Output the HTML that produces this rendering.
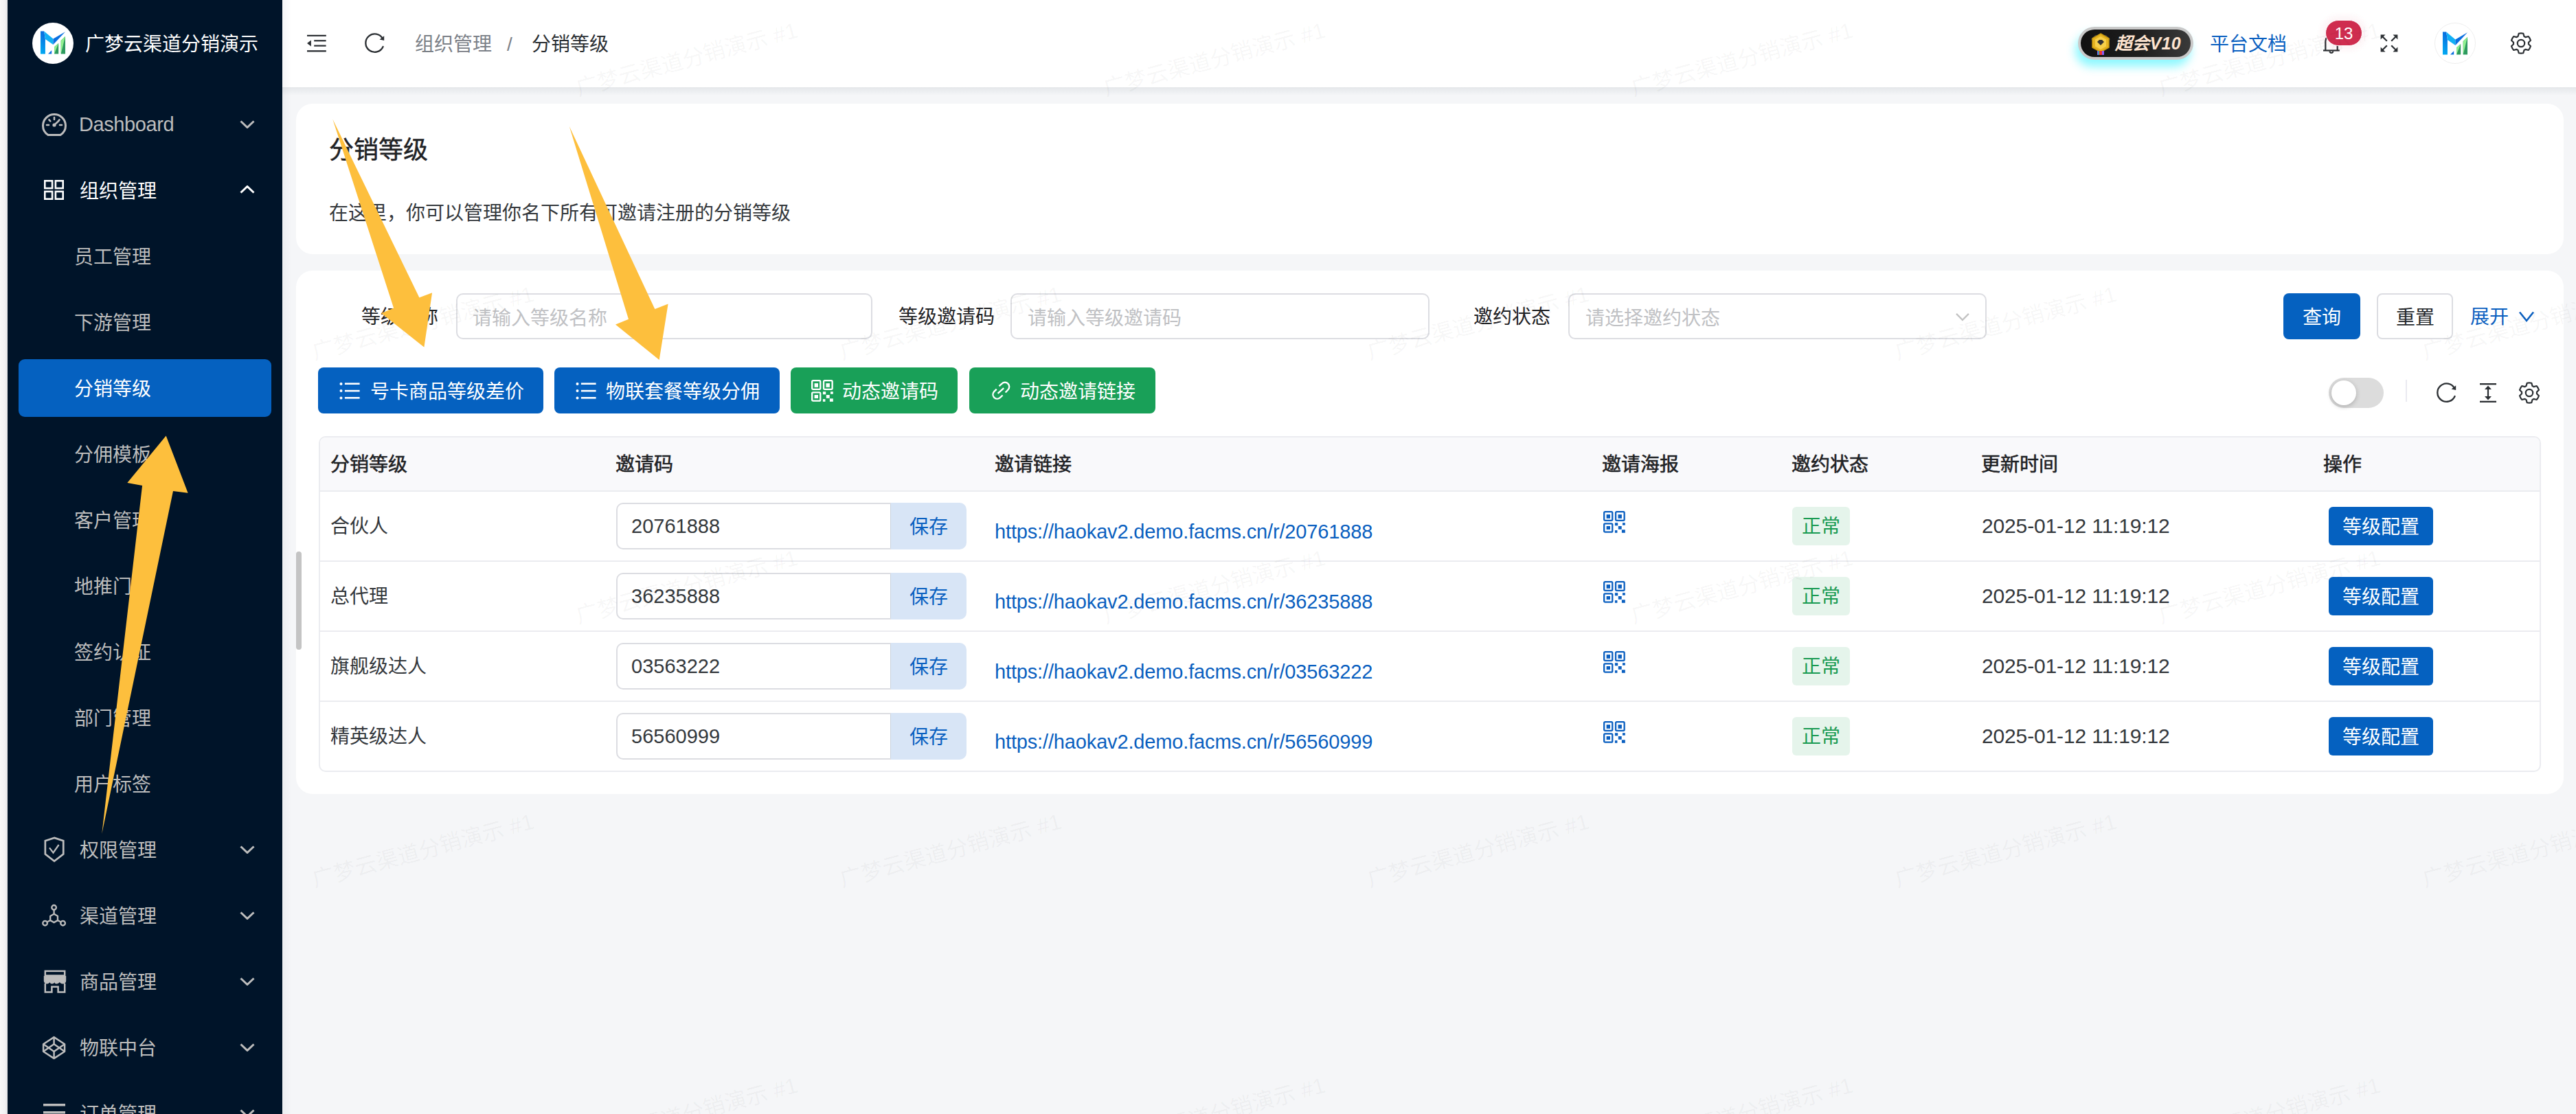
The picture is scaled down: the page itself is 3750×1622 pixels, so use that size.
<!DOCTYPE html>
<html lang="zh-CN">
<head>
<meta charset="utf-8">
<style>
*{box-sizing:border-box;margin:0;padding:0}
html,body{width:3750px;height:1622px;overflow:hidden}
body{position:relative;background:#f5f6f8;font-family:"Liberation Sans",sans-serif;font-size:28px;color:#23272b}
.a{position:absolute;white-space:nowrap}
#strip{left:0;top:0;width:11px;height:1622px;background:linear-gradient(90deg,#f8f8f9,#f2f2f4 65%,#e4e4e7)}
#side{left:11px;top:0;width:400px;height:1622px;background:#001429;overflow:hidden}
#hdr{left:411px;top:0;width:3339px;height:127px;background:#fff}
#hshadow{left:411px;top:127px;width:3339px;height:12px;background:linear-gradient(#e4e7ea,#f5f6f8)}
.card{background:#fff;border-radius:24px}
.mi{color:#bdbdbd;line-height:40px;font-size:28px}
.mi.w{color:#fff}
.ico{position:absolute}
.btn{position:absolute;border-radius:8px;color:#fff;font-size:28px;line-height:67px;height:67px}
.inp{position:absolute;border:2px solid #dcdde2;border-radius:10px;background:#fff;height:67px}
.ph{color:#c0c1c4}
.th{font-weight:normal;color:#1f2225;-webkit-text-stroke:0.6px #1f2225}
.hline{position:absolute;left:464px;width:3234px;height:2px;background:#ebecf0}
</style>
</head>
<body>
<div id="strip" class="a"></div>
<svg width="0" height="0" style="position:absolute"><defs>
<linearGradient id="gL" x1="0" y1="1" x2="0.3" y2="0"><stop offset="0" stop-color="#00d4ff"/><stop offset="1" stop-color="#0a6ee0"/></linearGradient>
<symbol id="mlogo" viewBox="140 150 900 830">
<path d="M150 160H275L320 440V970H150Z" fill="url(#gL)"/>
<path d="M150 160H275L310 970H150Z" fill="#0a6fe0" opacity=".35"/>
<path d="M275 160L600 430L600 640L320 440Z" fill="#12b0f5"/>
<path d="M600 430L1030 180L600 640Z" fill="#0a6fe0"/>
<path d="M420 965L545 840V965Z" fill="#0a6fe0"/>
<path d="M640 720L790 590V965H640Z" fill="#2e9a5f"/>
<path d="M640 720L790 590L640 965Z" fill="#90f090"/>
<path d="M875 490L1030 345V965H875Z" fill="#2e9a5f"/>
<path d="M875 490L1030 345L875 965Z" fill="#90f090"/>
</symbol>
</defs></svg>

<div id="side" class="a">
 <div class="a" style="left:36px;top:33px;width:60px;height:60px;border-radius:50%;background:#fff"></div>
 <svg class="ico" style="left:47px;top:45px" width="38" height="34"><use href="#mlogo" width="100%" height="100%"/></svg>
 <div class="a" style="left:113px;top:45px;line-height:40px;color:#fff;font-size:28px">广梦云渠道分销演示</div>
 <!-- Dashboard -->
 <svg class="ico" style="left:50px;top:165px" width="36" height="34" viewBox="0 0 36 34"><g fill="none" stroke="#bdbdbd" stroke-width="3"><path d="M9 31.5 C3.5 28 1.5 22.5 1.5 18 A16.5 16.5 0 0 1 34.5 18 C34.5 22.5 32.5 28 27 31.5 Z"/></g><g stroke="#bdbdbd" stroke-width="2.6" stroke-linecap="round"><path d="M18 6v3M7 17h3M26 17h3M10.5 9.5l1.8 1.8M25.5 9.5l-1.8 1.8M18 17l6.5-6"/></g><circle cx="18" cy="17" r="2.6" fill="#bdbdbd"/></svg>
 <div class="a mi" style="left:104px;top:161px;font-size:29px;letter-spacing:-0.4px">Dashboard</div>
 <svg class="ico" style="left:338px;top:175px" width="22" height="12" viewBox="0 0 22 12"><path d="M1.5 1.5l9.5 9 9.5-9" fill="none" stroke="#bdbdbd" stroke-width="3"/></svg>
 <!-- 组织管理 -->
 <svg class="ico" style="left:53px;top:262px" width="30" height="30" viewBox="0 0 30 30"><g fill="none" stroke="#fff" stroke-width="2.6"><rect x="1.3" y="1.3" width="10.8" height="10.8"/><rect x="16.9" y="1.3" width="10.8" height="10.8"/><rect x="1.3" y="16.9" width="10.8" height="10.8"/><rect x="16.9" y="16.9" width="10.8" height="10.8"/></g></svg>
 <div class="a mi w" style="left:105px;top:259px">组织管理</div>
 <svg class="ico" style="left:338px;top:270px" width="22" height="12" viewBox="0 0 22 12"><path d="M1.5 10.5l9.5-9 9.5 9" fill="none" stroke="#fff" stroke-width="3"/></svg>
 <!-- submenu -->
 <div class="a mi" style="left:97px;top:355px">员工管理</div>
 <div class="a mi" style="left:97px;top:451px">下游管理</div>
 <div class="a" style="left:16px;top:523px;width:368px;height:84px;border-radius:9px;background:#0561c0"></div>
 <div class="a mi w" style="left:97px;top:547px">分销等级</div>
 <div class="a mi" style="left:97px;top:643px">分佣模板</div>
 <div class="a mi" style="left:97px;top:739px">客户管理</div>
 <div class="a mi" style="left:97px;top:835px">地推门店</div>
 <div class="a mi" style="left:97px;top:931px">签约认证</div>
 <div class="a mi" style="left:97px;top:1027px">部门管理</div>
 <div class="a mi" style="left:97px;top:1123px">用户标签</div>
 <!-- 权限管理 -->
 <svg class="ico" style="left:49px;top:1214px" width="40" height="46" viewBox="60 1214 40 46"><path d="M79.04 1219.9 L92.26 1224.3 V1243.6 L79.04 1253.7 L65.86 1243.6 V1224.3 Z" fill="none" stroke="#bdbdbd" stroke-width="2.7" stroke-linejoin="miter"/><path d="M72 1234.4 L77.5 1241.6 L85.6 1230" fill="none" stroke="#bdbdbd" stroke-width="2.3"/></svg>
 <div class="a mi" style="left:105px;top:1219px">权限管理</div>
 <svg class="ico" style="left:338px;top:1231px" width="22" height="12" viewBox="0 0 22 12"><path d="M1.5 1.5l9.5 9 9.5-9" fill="none" stroke="#bdbdbd" stroke-width="3"/></svg>
 <!-- 渠道管理 -->
 <svg class="ico" style="left:45px;top:1314px" width="44" height="36" viewBox="56 1314 44 36"><g fill="none" stroke="#bdbdbd" stroke-width="2.3"><circle cx="78.6" cy="1321.3" r="3.3"/><circle cx="65.6" cy="1344.2" r="3.3"/><circle cx="91.6" cy="1344.2" r="3.3"/><polygon points="78.60,1330.70 73.23,1333.80 73.23,1340.00 78.60,1343.10 83.97,1340.00 83.97,1333.80"/><path d="M78.6 1324.6 V1330.7 M68.5 1342.5 L73.2 1340 M88.7 1342.5 L84 1340"/></g></svg>
 <div class="a mi" style="left:105px;top:1315px">渠道管理</div>
 <svg class="ico" style="left:338px;top:1327px" width="22" height="12" viewBox="0 0 22 12"><path d="M1.5 1.5l9.5 9 9.5-9" fill="none" stroke="#bdbdbd" stroke-width="3"/></svg>
 <!-- 商品管理 -->
 <svg class="ico" style="left:52px;top:1411px" width="34" height="36" viewBox="0 0 34 36"><g fill="none" stroke="#bdbdbd" stroke-width="2.5"><rect x="2.8" y="2.9" width="28.4" height="6.6"/><path d="M2.8 21 V33.4 H12.4 V25.8 H21.6 V33.4 H31.2 V21"/></g><path fill="#bdbdbd" d="M0.8 10 H33.2 V17 C33.2 19.5 31.5 21.5 28.5 21.5 C26 21.5 24.5 20 23.8 19 C23 20.5 21 21.5 19.2 21.5 C17.2 21.5 16 20.5 17 19 C16 20.5 14.2 21.5 12.8 21.5 C11 21.5 9.5 20.5 9.5 19 C8.8 20.5 7.2 21.5 5.5 21.5 C2.5 21.5 0.8 19.5 0.8 17Z"/></svg>
 <div class="a mi" style="left:105px;top:1411px">商品管理</div>
 <svg class="ico" style="left:338px;top:1423px" width="22" height="12" viewBox="0 0 22 12"><path d="M1.5 1.5l9.5 9 9.5-9" fill="none" stroke="#bdbdbd" stroke-width="3"/></svg>
 <!-- 物联中台 -->
 <svg class="ico" style="left:49.4px;top:1506.5px" width="37.2" height="37.2" viewBox="0 0 24 24"><g fill="none" stroke="#bdbdbd" stroke-width="1.6" stroke-linejoin="round"><polygon points="12 2 22 8.5 22 15.5 12 22 2 15.5 2 8.5 12 2"/><line x1="12" y1="22" x2="12" y2="15.5"/><polyline points="22 8.5 12 15.5 2 8.5"/><polyline points="2 15.5 12 8.5 22 15.5"/><line x1="12" y1="2" x2="12" y2="8.5"/></g></svg>
 <div class="a mi" style="left:105px;top:1507px">物联中台</div>
 <svg class="ico" style="left:338px;top:1519px" width="22" height="12" viewBox="0 0 22 12"><path d="M1.5 1.5l9.5 9 9.5-9" fill="none" stroke="#bdbdbd" stroke-width="3"/></svg>
 <!-- 订单管理 -->
 <svg class="ico" style="left:52px;top:1606px" width="32" height="30" viewBox="0 0 32 30"><g fill="#bdbdbd"><rect x="0" y="1" width="32" height="3.5"/><rect x="0" y="12" width="32" height="3.5"/><rect x="0" y="23" width="32" height="3.5"/></g></svg>
 <div class="a mi" style="left:105px;top:1603px">订单管理</div>
 <svg class="ico" style="left:338px;top:1615px" width="22" height="12" viewBox="0 0 22 12"><path d="M1.5 1.5l9.5 9 9.5-9" fill="none" stroke="#bdbdbd" stroke-width="3"/></svg>
</div>


<div id="hdr" class="a">
</div>
<!-- header content (absolute, page coords) -->
<svg class="ico" style="left:446px;top:50px" width="30" height="27" viewBox="446 50 30 27"><g fill="#2b2f33"><rect x="447" y="50.8" width="27.8" height="2.2"/><rect x="457.2" y="58.2" width="17.4" height="2.2"/><rect x="457.2" y="65.5" width="17.4" height="2.2"/><rect x="447" y="73.2" width="27.8" height="2.3"/><path d="M447 63 L452.9 58.4 V67.5Z"/></g></svg>
<svg class="ico" style="left:528px;top:46px" width="34" height="34" viewBox="528 46 34 34"><path d="M557.2 56.5 A13.2 13.2 0 1 0 557.6 68" fill="none" stroke="#2b2f33" stroke-width="2.3" stroke-linecap="round"/><path d="M559.2 52.3 V59 L552.6 57.4Z" fill="#2b2f33"/></svg>
<div class="a" style="left:604px;top:45px;line-height:40px;color:#7b8087">组织管理</div>
<div class="a" style="left:738px;top:45px;line-height:40px;color:#7b8087">/</div>
<div class="a" style="left:774px;top:45px;line-height:40px;color:#2b2f33">分销等级</div>
<!-- VIP badge -->
<div class="a" style="left:3025px;top:39px;width:168px;height:48px;border-radius:24px;background:#c9c9c9;box-shadow:-4px 10px 14px rgba(0,240,255,.45)"></div>
<div class="a" style="left:3029px;top:43px;width:160px;height:40px;border-radius:20px;background:linear-gradient(90deg,#111 0%,#1f1f1f 55%,#3a3a3a 100%)"></div>
<svg class="ico" style="left:3040px;top:47px" width="36" height="34" viewBox="0 0 36 34"><path d="M4 10 L10 4 L26 4 L32 10 L30 13 L6 13Z" fill="#555" opacity=".6"/><path d="M18 2 L30 9 V22 L18 29 L6 22 V9Z" fill="#e6b422" stroke="#c99a10" stroke-width="1.5"/><path d="M18 6 L26 10.5 V20.5 L18 25 L10 20.5 V10.5Z" fill="#f7d04a"/><path d="M13 14 L16 11 H20 L23 14 L18 19Z" fill="#333"/><rect x="13" y="27" width="10" height="6" fill="#8a5cf6"/><rect x="16" y="27" width="4" height="6" fill="#e33"/><rect x="14.5" y="27" width="1.5" height="6" fill="#2b9"/></svg>
<div class="a" style="left:3079px;top:43px;line-height:40px;color:#fde3cf;font-size:25px;font-weight:bold;font-style:italic;letter-spacing:0.3px">超会V10</div>
<div class="a" style="left:3217px;top:45px;line-height:40px;color:#0a5fc0;font-size:28px">平台文档</div>
<!-- bell -->
<svg class="ico" style="left:3380px;top:44px" width="28" height="36" viewBox="3380 44 28 36"><path d="M3385.3 73 V60 A8.7 8.7 0 0 1 3402.7 60 V73" fill="none" stroke="#2b2f33" stroke-width="2.2"/><path d="M3382 73.5 H3405.8" stroke="#2b2f33" stroke-width="2.2"/><path d="M3391.5 74.5 A2.4 2.4 0 0 0 3396.3 74.5" fill="none" stroke="#2b2f33" stroke-width="2"/></svg>
<div class="a" style="left:3385px;top:29px;width:54px;height:38px;border-radius:19px;background:#cf2d4f;border:1.5px solid #fff;box-shadow:0 0 8px 6px rgba(208,48,80,0.05);color:#fff;font-size:24px;line-height:37px;text-align:center">13</div>
<!-- fullscreen -->
<svg class="ico" style="left:3464px;top:49px" width="28" height="28" viewBox="0 0 28 28"><g fill="#2b2f33"><path d="M1.6 1.6 H8.5 L1.6 8.5Z"/><path d="M26.4 1.6 H19.5 L26.4 8.5Z"/><path d="M1.6 26.4 H8.5 L1.6 19.5Z"/><path d="M26.4 26.4 H19.5 L26.4 19.5Z"/></g><g stroke="#2b2f33" stroke-width="2.3"><path d="M4 4 L10.8 10.8M24 4 L17.2 10.8M4 24 L10.8 17.2M24 24 L17.2 17.2"/></g></svg>
<!-- avatar -->
<div class="a" style="left:3544px;top:33px;width:60px;height:60px;border-radius:50%;background:#fff;border:1px solid #eeeeee"></div>
<svg class="ico" style="left:3555px;top:46px" width="38" height="34"><use href="#mlogo" width="100%" height="100%"/></svg>
<!-- gear -->
<svg class="ico" style="left:3654px;top:47px" width="32" height="32" viewBox="0 0 32 32"><path d="M11.53 5.95 L12.72 1.77 A14.60 14.60 0 0 1 19.28 1.77 L20.47 5.95 A11.00 11.00 0 0 1 22.47 7.10 L26.68 6.04 A14.60 14.60 0 0 1 29.96 11.73 L26.94 14.85 A11.00 11.00 0 0 1 26.94 17.15 L29.96 20.27 A14.60 14.60 0 0 1 26.68 25.96 L22.47 24.90 A11.00 11.00 0 0 1 20.47 26.05 L19.28 30.23 A14.60 14.60 0 0 1 12.72 30.23 L11.53 26.05 A11.00 11.00 0 0 1 9.53 24.90 L5.32 25.96 A14.60 14.60 0 0 1 2.04 20.27 L5.06 17.15 A11.00 11.00 0 0 1 5.06 14.85 L2.04 11.73 A14.60 14.60 0 0 1 5.32 6.04 L9.53 7.10 A11.00 11.00 0 0 1 11.53 5.95 Z" fill="none" stroke="#2b2f33" stroke-width="2.2" stroke-linejoin="round"/><circle cx="16" cy="16" r="5.2" fill="none" stroke="#2b2f33" stroke-width="2.2"/></svg>

<div id="hshadow" class="a"></div>
<div class="a" style="left:412px;top:0;width:12px;height:1622px;background:linear-gradient(90deg,rgba(0,20,40,0.035),rgba(0,20,40,0))"></div>
<div class="a card" style="left:431px;top:151px;width:3301px;height:219px"></div>
<div class="a card" style="left:431px;top:394px;width:3301px;height:762px"></div>

<!-- card1 -->
<div class="a" style="left:479px;top:197px;line-height:44px;font-size:36px;font-weight:normal;color:#1f2225;-webkit-text-stroke:0.5px #1f2225">分销等级</div>
<div class="a" style="left:479px;top:291px;line-height:40px;color:#34383c">在这里，你可以管理你名下所有可邀请注册的分销等级</div>
<!-- filter -->
<div class="a" style="left:526px;top:442px;line-height:40px;color:#1f2225">等级名称</div>
<div class="inp" style="left:664px;top:427px;width:606px"></div>
<div class="a ph" style="left:688px;top:444px;line-height:40px">请输入等级名称</div>
<div class="a" style="left:1308px;top:442px;line-height:40px;color:#1f2225">等级邀请码</div>
<div class="inp" style="left:1471px;top:427px;width:610px"></div>
<div class="a ph" style="left:1496px;top:444px;line-height:40px">请输入等级邀请码</div>
<div class="a" style="left:2145px;top:442px;line-height:40px;color:#1f2225">邀约状态</div>
<div class="inp" style="left:2283px;top:427px;width:609px"></div>
<div class="a ph" style="left:2308px;top:444px;line-height:40px">请选择邀约状态</div>
<svg class="ico" style="left:2840px;top:450px" width="32" height="22" viewBox="2840 450 32 22"><path d="M2848 456.9 L2856.9 465.85 L2865.9 456.9" fill="none" stroke="#c2c2c2" stroke-width="2.3"/></svg>
<div class="btn" style="left:3324px;top:427px;width:112px;background:#0561c0;text-align:center;line-height:71px">查询</div>
<div class="btn" style="left:3460px;top:427px;width:111px;background:#fff;border:2px solid #dcdde2;color:#23272b;text-align:center;line-height:67px">重置</div>
<div class="a" style="left:3596px;top:442px;line-height:40px;color:#0a5fc0">展开</div>
<svg class="ico" style="left:3666px;top:452px" width="24" height="18" viewBox="0 0 24 18"><path d="M2 2.5l10 12.5 10-12.5" fill="none" stroke="#0a5fc0" stroke-width="2.6"/></svg>
<!-- toolbar buttons -->
<div class="btn" style="left:463px;top:535px;width:328px;background:#0561c0"></div>
<svg class="ico" style="left:494px;top:557px" width="31" height="25" viewBox="0 0 31 25"><g fill="#fff"><circle cx="2.5" cy="1.9" r="2"/><circle cx="2.5" cy="12.1" r="2"/><circle cx="2.5" cy="22.4" r="2"/><rect x="7.9" y="0.4" width="21.7" height="2.6"/><rect x="7.9" y="10.8" width="21.7" height="2.6"/><rect x="7.9" y="21" width="21.7" height="2.6"/></g></svg>
<div class="a" style="left:539px;top:551px;line-height:40px;color:#fff">号卡商品等级差价</div>
<div class="btn" style="left:807px;top:535px;width:328px;background:#0561c0"></div>
<svg class="ico" style="left:838px;top:557px" width="31" height="25" viewBox="0 0 31 25"><g fill="#fff"><circle cx="2.5" cy="1.9" r="2"/><circle cx="2.5" cy="12.1" r="2"/><circle cx="2.5" cy="22.4" r="2"/><rect x="7.9" y="0.4" width="21.7" height="2.6"/><rect x="7.9" y="10.8" width="21.7" height="2.6"/><rect x="7.9" y="21" width="21.7" height="2.6"/></g></svg>
<div class="a" style="left:882px;top:551px;line-height:40px;color:#fff">物联套餐等级分佣</div>
<div class="btn" style="left:1151px;top:535px;width:243px;background:#19a058"></div>
<svg class="ico" style="left:1181px;top:553px" width="32.0" height="32.0" viewBox="0 0 32 32"><g fill="none" stroke="#fff" stroke-width="2.3"><rect x="1.15" y="1.15" width="12.1" height="12.7" rx="1.5"/><rect x="18.05" y="1.15" width="12.6" height="12.7" rx="1.5"/><rect x="1.15" y="18.35" width="12.1" height="12.3" rx="1.5"/></g><g fill="#fff"><rect x="4.6" y="5.1" width="5.4" height="5.7"/><rect x="21.5" y="5.1" width="5.4" height="5.7"/><rect x="4.6" y="22" width="5.4" height="5"/><rect x="16.9" y="17.2" width="4.3" height="4.1"/><rect x="28" y="17.2" width="3.8" height="3.5"/><rect x="21.8" y="22" width="4.9" height="4.8"/><rect x="16.9" y="28.1" width="3.5" height="3.7"/><rect x="26.9" y="27.3" width="4.9" height="4.5"/></g></svg>
<div class="a" style="left:1226px;top:551px;line-height:40px;color:#fff">动态邀请码</div>
<div class="btn" style="left:1411px;top:535px;width:271px;background:#19a058"></div>
<svg class="ico" style="left:1443px;top:555px" width="28" height="28" viewBox="0 0 28 28"><g fill="none" stroke="#fff" stroke-width="2.4"><path d="M7.73 11.66 L3.9 15.4 A6.25 6.25 0 0 0 12.7 24.2 L16.6 20.5"/><path d="M11.5 7.08 L15.5 3.6 A6.25 6.25 0 0 1 24.4 12.5 L20.66 16.5"/><path d="M9.6 17.85 L18.2 10.04"/></g></svg>
<div class="a" style="left:1485px;top:551px;line-height:40px;color:#fff">动态邀请链接</div>
<!-- toolbar right -->
<div class="a" style="left:3390px;top:550px;width:80px;height:44px;border-radius:22px;background:#dcdcdc"></div>
<div class="a" style="left:3394px;top:554px;width:36px;height:36px;border-radius:50%;background:#fff;box-shadow:0 2px 7px rgba(0,0,0,.22)"></div>
<div class="a" style="left:3502px;top:553px;width:2px;height:32px;background:#eaeaf1"></div>
<svg class="ico" style="left:3542px;top:555px" width="34" height="34" viewBox="528 46 34 34" ><g transform="translate(2,0)"><path d="M557.2 56.5 A13.2 13.2 0 1 0 557.6 68" fill="none" stroke="#2b2f33" stroke-width="2.3" stroke-linecap="round"/><path d="M559.2 52.3 V59 L552.6 57.4Z" fill="#2b2f33"/></g></svg>
<svg class="ico" style="left:3609px;top:557px" width="26" height="30" viewBox="0 0 26 30"><g fill="#2b2f33"><rect x="1" y="1" width="24" height="2.3"/><rect x="1" y="26.7" width="24" height="2.3"/><rect x="11.9" y="6" width="2.2" height="18"/><path d="M13 4.5 L18 10 H8Z"/><path d="M13 25.5 L18 20 H8Z"/></g></svg>
<svg class="ico" style="left:3666px;top:556px" width="32" height="32" viewBox="0 0 32 32"><path d="M11.53 5.95 L12.72 1.77 A14.60 14.60 0 0 1 19.28 1.77 L20.47 5.95 A11.00 11.00 0 0 1 22.47 7.10 L26.68 6.04 A14.60 14.60 0 0 1 29.96 11.73 L26.94 14.85 A11.00 11.00 0 0 1 26.94 17.15 L29.96 20.27 A14.60 14.60 0 0 1 26.68 25.96 L22.47 24.90 A11.00 11.00 0 0 1 20.47 26.05 L19.28 30.23 A14.60 14.60 0 0 1 12.72 30.23 L11.53 26.05 A11.00 11.00 0 0 1 9.53 24.90 L5.32 25.96 A14.60 14.60 0 0 1 2.04 20.27 L5.06 17.15 A11.00 11.00 0 0 1 5.06 14.85 L2.04 11.73 A14.60 14.60 0 0 1 5.32 6.04 L9.53 7.10 A11.00 11.00 0 0 1 11.53 5.95 Z" fill="none" stroke="#2b2f33" stroke-width="2.2" stroke-linejoin="round"/><circle cx="16" cy="16" r="5.2" fill="none" stroke="#2b2f33" stroke-width="2.2"/></svg>
<!-- table -->
<div class="a" style="left:464px;top:635px;width:3235px;height:489px;border:2px solid #ebecf0;border-radius:10px;background:#fff;overflow:hidden">
  <div style="position:absolute;left:0;top:0;width:100%;height:79px;background:#f9f9fb"></div>
</div>
<div class="hline" style="top:714px"></div>
<div class="hline" style="top:816px"></div>
<div class="hline" style="top:918px"></div>
<div class="hline" style="top:1020px"></div>
<div class="a th" style="left:481px;top:657px;line-height:40px">分销等级</div>
<div class="a th" style="left:896px;top:657px;line-height:40px">邀请码</div>
<div class="a th" style="left:1448px;top:657px;line-height:40px">邀请链接</div>
<div class="a th" style="left:2332px;top:657px;line-height:40px">邀请海报</div>
<div class="a th" style="left:2608px;top:657px;line-height:40px">邀约状态</div>
<div class="a th" style="left:2884px;top:657px;line-height:40px">更新时间</div>
<div class="a th" style="left:3382px;top:657px;line-height:40px">操作</div>

<div class="a" style="left:481px;top:747px;line-height:40px;color:#34383c">合伙人</div>
<div class="inp" style="left:897px;top:732px;width:401px;height:68px;border-radius:10px 0 0 10px;border-right:2px solid #c9d2de"></div>
<div class="a" style="left:1297px;top:732px;width:110px;height:68px;border-radius:0 10px 10px 0;background:#d8e5f6;color:#0a5fc0;text-align:center;line-height:72px">保存</div>
<div class="a" style="left:919px;top:746px;line-height:40px;color:#34383c;font-size:29px">20761888</div>
<div class="a" style="left:1448px;top:754px;line-height:40px;color:#0a5fc0;font-size:29px;letter-spacing:-0.15px">https://haokav2.demo.facms.cn/r/20761888</div>
<svg class="ico" style="left:2334px;top:744px" width="32.0" height="32.0" viewBox="0 0 32 32"><g fill="none" stroke="#0a5fc0" stroke-width="2.3"><rect x="1.15" y="1.15" width="12.1" height="12.7" rx="1.5"/><rect x="18.05" y="1.15" width="12.6" height="12.7" rx="1.5"/><rect x="1.15" y="18.35" width="12.1" height="12.3" rx="1.5"/></g><g fill="#0a5fc0"><rect x="4.6" y="5.1" width="5.4" height="5.7"/><rect x="21.5" y="5.1" width="5.4" height="5.7"/><rect x="4.6" y="22" width="5.4" height="5"/><rect x="16.9" y="17.2" width="4.3" height="4.1"/><rect x="28" y="17.2" width="3.8" height="3.5"/><rect x="21.8" y="22" width="4.9" height="4.8"/><rect x="16.9" y="28.1" width="3.5" height="3.7"/><rect x="26.9" y="27.3" width="4.9" height="4.5"/></g></svg>
<div class="a" style="left:2609px;top:738px;width:84px;height:56px;border-radius:6px;background:#e5f4eb;color:#1a9a52;text-align:center;line-height:58px">正常</div>
<div class="a" style="left:2885px;top:746px;line-height:40px;color:#34383c;font-size:30px;letter-spacing:-0.15px">2025-01-12 11:19:12</div>
<div class="a" style="left:3390px;top:738px;width:152px;height:56px;border-radius:6px;background:#0561c0;color:#fff;text-align:center;line-height:60px">等级配置</div>

<div class="a" style="left:481px;top:849px;line-height:40px;color:#34383c">总代理</div>
<div class="inp" style="left:897px;top:834px;width:401px;height:68px;border-radius:10px 0 0 10px;border-right:2px solid #c9d2de"></div>
<div class="a" style="left:1297px;top:834px;width:110px;height:68px;border-radius:0 10px 10px 0;background:#d8e5f6;color:#0a5fc0;text-align:center;line-height:72px">保存</div>
<div class="a" style="left:919px;top:848px;line-height:40px;color:#34383c;font-size:29px">36235888</div>
<div class="a" style="left:1448px;top:856px;line-height:40px;color:#0a5fc0;font-size:29px;letter-spacing:-0.15px">https://haokav2.demo.facms.cn/r/36235888</div>
<svg class="ico" style="left:2334px;top:846px" width="32.0" height="32.0" viewBox="0 0 32 32"><g fill="none" stroke="#0a5fc0" stroke-width="2.3"><rect x="1.15" y="1.15" width="12.1" height="12.7" rx="1.5"/><rect x="18.05" y="1.15" width="12.6" height="12.7" rx="1.5"/><rect x="1.15" y="18.35" width="12.1" height="12.3" rx="1.5"/></g><g fill="#0a5fc0"><rect x="4.6" y="5.1" width="5.4" height="5.7"/><rect x="21.5" y="5.1" width="5.4" height="5.7"/><rect x="4.6" y="22" width="5.4" height="5"/><rect x="16.9" y="17.2" width="4.3" height="4.1"/><rect x="28" y="17.2" width="3.8" height="3.5"/><rect x="21.8" y="22" width="4.9" height="4.8"/><rect x="16.9" y="28.1" width="3.5" height="3.7"/><rect x="26.9" y="27.3" width="4.9" height="4.5"/></g></svg>
<div class="a" style="left:2609px;top:840px;width:84px;height:56px;border-radius:6px;background:#e5f4eb;color:#1a9a52;text-align:center;line-height:58px">正常</div>
<div class="a" style="left:2885px;top:848px;line-height:40px;color:#34383c;font-size:30px;letter-spacing:-0.15px">2025-01-12 11:19:12</div>
<div class="a" style="left:3390px;top:840px;width:152px;height:56px;border-radius:6px;background:#0561c0;color:#fff;text-align:center;line-height:60px">等级配置</div>

<div class="a" style="left:481px;top:951px;line-height:40px;color:#34383c">旗舰级达人</div>
<div class="inp" style="left:897px;top:936px;width:401px;height:68px;border-radius:10px 0 0 10px;border-right:2px solid #c9d2de"></div>
<div class="a" style="left:1297px;top:936px;width:110px;height:68px;border-radius:0 10px 10px 0;background:#d8e5f6;color:#0a5fc0;text-align:center;line-height:72px">保存</div>
<div class="a" style="left:919px;top:950px;line-height:40px;color:#34383c;font-size:29px">03563222</div>
<div class="a" style="left:1448px;top:958px;line-height:40px;color:#0a5fc0;font-size:29px;letter-spacing:-0.15px">https://haokav2.demo.facms.cn/r/03563222</div>
<svg class="ico" style="left:2334px;top:948px" width="32.0" height="32.0" viewBox="0 0 32 32"><g fill="none" stroke="#0a5fc0" stroke-width="2.3"><rect x="1.15" y="1.15" width="12.1" height="12.7" rx="1.5"/><rect x="18.05" y="1.15" width="12.6" height="12.7" rx="1.5"/><rect x="1.15" y="18.35" width="12.1" height="12.3" rx="1.5"/></g><g fill="#0a5fc0"><rect x="4.6" y="5.1" width="5.4" height="5.7"/><rect x="21.5" y="5.1" width="5.4" height="5.7"/><rect x="4.6" y="22" width="5.4" height="5"/><rect x="16.9" y="17.2" width="4.3" height="4.1"/><rect x="28" y="17.2" width="3.8" height="3.5"/><rect x="21.8" y="22" width="4.9" height="4.8"/><rect x="16.9" y="28.1" width="3.5" height="3.7"/><rect x="26.9" y="27.3" width="4.9" height="4.5"/></g></svg>
<div class="a" style="left:2609px;top:942px;width:84px;height:56px;border-radius:6px;background:#e5f4eb;color:#1a9a52;text-align:center;line-height:58px">正常</div>
<div class="a" style="left:2885px;top:950px;line-height:40px;color:#34383c;font-size:30px;letter-spacing:-0.15px">2025-01-12 11:19:12</div>
<div class="a" style="left:3390px;top:942px;width:152px;height:56px;border-radius:6px;background:#0561c0;color:#fff;text-align:center;line-height:60px">等级配置</div>

<div class="a" style="left:481px;top:1053px;line-height:40px;color:#34383c">精英级达人</div>
<div class="inp" style="left:897px;top:1038px;width:401px;height:68px;border-radius:10px 0 0 10px;border-right:2px solid #c9d2de"></div>
<div class="a" style="left:1297px;top:1038px;width:110px;height:68px;border-radius:0 10px 10px 0;background:#d8e5f6;color:#0a5fc0;text-align:center;line-height:72px">保存</div>
<div class="a" style="left:919px;top:1052px;line-height:40px;color:#34383c;font-size:29px">56560999</div>
<div class="a" style="left:1448px;top:1060px;line-height:40px;color:#0a5fc0;font-size:29px;letter-spacing:-0.15px">https://haokav2.demo.facms.cn/r/56560999</div>
<svg class="ico" style="left:2334px;top:1050px" width="32.0" height="32.0" viewBox="0 0 32 32"><g fill="none" stroke="#0a5fc0" stroke-width="2.3"><rect x="1.15" y="1.15" width="12.1" height="12.7" rx="1.5"/><rect x="18.05" y="1.15" width="12.6" height="12.7" rx="1.5"/><rect x="1.15" y="18.35" width="12.1" height="12.3" rx="1.5"/></g><g fill="#0a5fc0"><rect x="4.6" y="5.1" width="5.4" height="5.7"/><rect x="21.5" y="5.1" width="5.4" height="5.7"/><rect x="4.6" y="22" width="5.4" height="5"/><rect x="16.9" y="17.2" width="4.3" height="4.1"/><rect x="28" y="17.2" width="3.8" height="3.5"/><rect x="21.8" y="22" width="4.9" height="4.8"/><rect x="16.9" y="28.1" width="3.5" height="3.7"/><rect x="26.9" y="27.3" width="4.9" height="4.5"/></g></svg>
<div class="a" style="left:2609px;top:1044px;width:84px;height:56px;border-radius:6px;background:#e5f4eb;color:#1a9a52;text-align:center;line-height:58px">正常</div>
<div class="a" style="left:2885px;top:1052px;line-height:40px;color:#34383c;font-size:30px;letter-spacing:-0.15px">2025-01-12 11:19:12</div>
<div class="a" style="left:3390px;top:1044px;width:152px;height:56px;border-radius:6px;background:#0561c0;color:#fff;text-align:center;line-height:60px">等级配置</div>

<div class="a" style="left:431px;top:803px;width:8px;height:143px;border-radius:4px;background:#c4c4c4"></div>

<svg class="a" style="left:0;top:0;pointer-events:none" width="3750" height="1622" viewBox="0 0 3750 1622">
<defs><clipPath id="wmclip"><rect x="411" y="0" width="3339" height="1622"/></clipPath></defs><g clip-path="url(#wmclip)" font-family="Liberation Sans, sans-serif" font-size="32" fill="rgba(0,0,0,0.045)"><text x="74" y="1676" transform="rotate(-15 74 1676)">广梦云渠道分销演示 #1</text><text x="842" y="1676" transform="rotate(-15 842 1676)">广梦云渠道分销演示 #1</text><text x="1610" y="1676" transform="rotate(-15 1610 1676)">广梦云渠道分销演示 #1</text><text x="2378" y="1676" transform="rotate(-15 2378 1676)">广梦云渠道分销演示 #1</text><text x="3146" y="1676" transform="rotate(-15 3146 1676)">广梦云渠道分销演示 #1</text><text x="-310" y="1292" transform="rotate(-15 -310 1292)">广梦云渠道分销演示 #1</text><text x="458" y="1292" transform="rotate(-15 458 1292)">广梦云渠道分销演示 #1</text><text x="1226" y="1292" transform="rotate(-15 1226 1292)">广梦云渠道分销演示 #1</text><text x="1994" y="1292" transform="rotate(-15 1994 1292)">广梦云渠道分销演示 #1</text><text x="2762" y="1292" transform="rotate(-15 2762 1292)">广梦云渠道分销演示 #1</text><text x="3530" y="1292" transform="rotate(-15 3530 1292)">广梦云渠道分销演示 #1</text><text x="74" y="908" transform="rotate(-15 74 908)">广梦云渠道分销演示 #1</text><text x="842" y="908" transform="rotate(-15 842 908)">广梦云渠道分销演示 #1</text><text x="1610" y="908" transform="rotate(-15 1610 908)">广梦云渠道分销演示 #1</text><text x="2378" y="908" transform="rotate(-15 2378 908)">广梦云渠道分销演示 #1</text><text x="3146" y="908" transform="rotate(-15 3146 908)">广梦云渠道分销演示 #1</text><text x="-310" y="524" transform="rotate(-15 -310 524)">广梦云渠道分销演示 #1</text><text x="458" y="524" transform="rotate(-15 458 524)">广梦云渠道分销演示 #1</text><text x="1226" y="524" transform="rotate(-15 1226 524)">广梦云渠道分销演示 #1</text><text x="1994" y="524" transform="rotate(-15 1994 524)">广梦云渠道分销演示 #1</text><text x="2762" y="524" transform="rotate(-15 2762 524)">广梦云渠道分销演示 #1</text><text x="3530" y="524" transform="rotate(-15 3530 524)">广梦云渠道分销演示 #1</text><text x="74" y="140" transform="rotate(-15 74 140)">广梦云渠道分销演示 #1</text><text x="842" y="140" transform="rotate(-15 842 140)">广梦云渠道分销演示 #1</text><text x="1610" y="140" transform="rotate(-15 1610 140)">广梦云渠道分销演示 #1</text><text x="2378" y="140" transform="rotate(-15 2378 140)">广梦云渠道分销演示 #1</text><text x="3146" y="140" transform="rotate(-15 3146 140)">广梦云渠道分销演示 #1</text></g>
<g fill="#fdbf3d">
<path d="M484.3 173.6 L610.4 433.2 L629.1 426.2 L617.4 505.5 L555 456 L573.1 448.4 Z"/>
<path d="M828.8 183.9 L953.3 450 L972.6 442.6 L959.7 524 L896 472.5 L915 464.7 Z"/>
<path d="M148.3 1214 L207.1 707 L185.3 703.1 L241.7 634.5 L273.6 717.7 L252 714.9 Z"/>
</g>
</svg>
</body>
</html>
